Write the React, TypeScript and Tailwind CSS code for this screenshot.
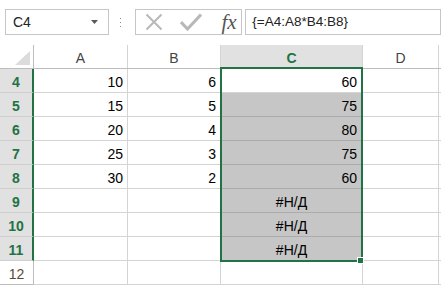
const GREEN = "#217346";

type Row = { n: number; a: string; b: string; c: string; sel: boolean };

const rows: Row[] = [
  { n: 4, a: "10", b: "6", c: "60", sel: true },
  { n: 5, a: "15", b: "5", c: "75", sel: true },
  { n: 6, a: "20", b: "4", c: "80", sel: true },
  { n: 7, a: "25", b: "3", c: "75", sel: true },
  { n: 8, a: "30", b: "2", c: "60", sel: true },
  { n: 9, a: "", b: "", c: "#Н/Д", sel: true },
  { n: 10, a: "", b: "", c: "#Н/Д", sel: true },
  { n: 11, a: "", b: "", c: "#Н/Д", sel: true },
  { n: 12, a: "", b: "", c: "", sel: false },
];

function FormulaBar() {
  return (
    <div className="flex h-[45px] items-start pt-[9px]">
      {/* name box */}
      <div className="ml-[5px] flex h-[26px] w-[106px] items-center justify-between border border-[#c6c6c6] pl-[7px] pr-[10px] text-[14px] text-[#222]">
        <span>C4</span>
        <svg width="7" height="4" viewBox="0 0 7 4">
          <polygon points="0,0 7,0 3.5,4" fill="#5a5a5a" />
        </svg>
      </div>
      <div className="flex h-[26px] w-[24px] flex-col items-center justify-center gap-[3px]">
        <span className="h-[1px] w-[1px] bg-[#8a8a8a]" />
        <span className="h-[1px] w-[1px] bg-[#8a8a8a]" />
        <span className="h-[1px] w-[1px] bg-[#8a8a8a]" />
      </div>
      {/* cancel / enter / fx */}
      <div className="ml-[2px] flex h-[26px] w-[110px] items-center border border-[#c6c6c6] pl-[9px]">
        <svg width="18" height="18" viewBox="0 0 18 18">
          <path d="M1.5 1.5 L16.5 16.5 M16.5 1.5 L1.5 16.5" stroke="#b8b8b8" strokeWidth="2" fill="none" />
        </svg>
        <svg className="ml-[17px]" width="22" height="18" viewBox="0 0 22 18">
          <path d="M1 9 L7.5 16 L21 1.5" stroke="#b8b8b8" strokeWidth="3" fill="none" strokeLinejoin="miter" />
        </svg>
        <span className="ml-[20px] font-['Liberation_Serif',serif] text-[21px] italic leading-none text-[#555]">
          fx
        </span>
      </div>
      <div className="ml-[3px] flex h-[26px] w-[200px] items-center border border-[#c6c6c6] pl-[6px] text-[13.5px] text-[#222]">
        {"{=A4:A8*B4:B8}"}
      </div>
    </div>
  );
}

function HeaderRow() {
  return (
    <div className="flex h-[24px] border-b border-[#bdbdbd] text-[14px] leading-[16px] text-[#444]">
      <div className="relative w-[34px] border-r border-[#bdbdbd]">
        <svg className="absolute left-0 top-0" width="34" height="23" viewBox="0 0 34 23">
          <polygon points="30,6 30,20 15,20" fill="#dcdcdc" />
        </svg>
      </div>
      <div className="flex w-[94px] justify-center border-r border-[#d4d4d4] pt-[5px]">A</div>
      <div className="flex w-[93px] justify-center border-r border-[#d4d4d4] pt-[5px]">B</div>
      <div className="flex w-[142px] justify-center border-r border-[#d4d4d4] bg-[#e1e1e1] pt-[5px] font-bold text-[#217346]">
        C
      </div>
      <div className="flex w-[76px] justify-center border-r border-[#d4d4d4] pt-[5px]">D</div>
      <div className="flex-1" />
    </div>
  );
}

function DataRow({ r }: { r: Row }) {
  const isNa = r.c.startsWith("#");
  return (
    <div className="flex h-[24px] text-[14px] leading-[16px] text-black">
      <div
        className={
          r.sel
            ? "flex w-[34px] justify-center border-b border-r-2 border-b-[#cfcfcf] border-r-[#217346] bg-[#e1e1e1] pt-[5px] font-bold text-[#217346]"
            : "flex w-[34px] justify-center border-b border-r border-[#bdbdbd] pt-[5px] text-[#5b4a33]"
        }
      >
        {r.n}
      </div>
      <div className="flex w-[94px] justify-end border-b border-r border-[#d4d4d4] pr-[4px] pt-[5px]">{r.a}</div>
      <div className="flex w-[93px] justify-end border-b border-r border-[#d4d4d4] pr-[4px] pt-[5px]">{r.b}</div>
      <div
        className={
          (r.sel && r.n !== 4 ? "border-[#ababab] bg-[#c6c6c6] " : "border-[#d4d4d4] ") +
          (isNa ? "justify-center " : "justify-end pr-[5px] ") +
          "flex w-[142px] border-b border-r pt-[5px]"
        }
      >
        {r.c}
      </div>
      <div className="w-[76px] border-b border-r border-[#d4d4d4]" />
      <div className="flex-1 border-b border-[#d4d4d4]" />
    </div>
  );
}

export default function App() {
  return (
    <div className="h-[287px] w-[441px] overflow-hidden bg-white font-['Liberation_Sans',Arial,sans-serif]">
      <FormulaBar />
      <div className="relative">
        <HeaderRow />
        {rows.map((r) => (
          <DataRow key={r.n} r={r} />
        ))}
        {/* selection outline and fill handle */}
        <div className="absolute left-[220px] top-[22px] h-[195px] w-[143px] border-2" style={{ borderColor: GREEN }} />
        <div className="absolute left-[357px] top-[212px] h-[7px] w-[7px] border border-white bg-[#217346]" />
      </div>
    </div>
  );
}
